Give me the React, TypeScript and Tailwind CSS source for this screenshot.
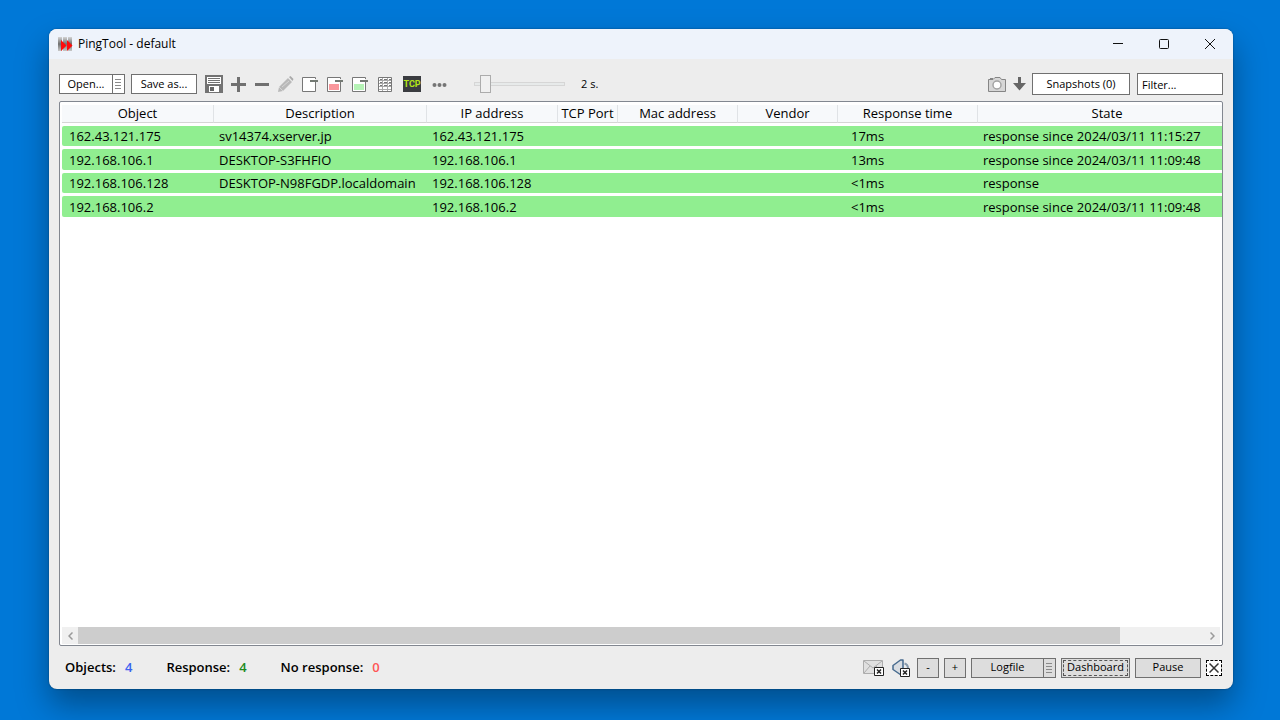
import React from 'react';

type Row = { object: string; description: string; ip: string; time: string; state: string };

const columns = [
  { name: 'Object', width: 'w-[152px]' },
  { name: 'Description', width: 'w-[213px]' },
  { name: 'IP address', width: 'w-[131px]' },
  { name: 'TCP Port', width: 'w-[60px]' },
  { name: 'Mac address', width: 'w-[120px]' },
  { name: 'Vendor', width: 'w-[100px]' },
  { name: 'Response time', width: 'w-[140px]' },
  { name: 'State', width: 'w-[259px]' },
];

const rows: Row[] = [
  { object: '162.43.121.175', description: 'sv14374.xserver.jp', ip: '162.43.121.175', time: '17ms', state: 'response since 2024/03/11 11:15:27' },
  { object: '192.168.106.1', description: 'DESKTOP-S3FHFIO', ip: '192.168.106.1', time: '13ms', state: 'response since 2024/03/11 11:09:48' },
  { object: '192.168.106.128', description: 'DESKTOP-N98FGDP.localdomain', ip: '192.168.106.128', time: '<1ms', state: 'response' },
  { object: '192.168.106.2', description: '', ip: '192.168.106.2', time: '<1ms', state: 'response since 2024/03/11 11:09:48' },
];

const whiteButton = 'border border-[#707070] bg-white pt-px text-center whitespace-nowrap';
const grayButton = 'h-5 border border-[#707070] bg-[#dddddd] text-center whitespace-nowrap';

const Logo = () => (
  <svg width="15" height="15" viewBox="0 0 15 15" aria-hidden="true">
    <defs>
      <linearGradient id="bars" x1="0" y1="0" x2="0" y2="1">
        <stop offset="0" stopColor="#d4d4d4" />
        <stop offset="0.5" stopColor="#6f6f6f" />
        <stop offset="1" stopColor="#c9c9c9" />
      </linearGradient>
    </defs>
    <path d="M0 0h4v14H0zM5 0h4v14H5zM10 0h4v14h-4z" fill="url(#bars)" />
    <path d="M3 3l5.500 5.500L3 14zM9 3l5.500 5.500L9 14z" fill="#fe0b0b" />
  </svg>
);

const Grip = () => (
  <svg width="7" height="10" viewBox="0 0 7 10" aria-hidden="true">
    <path d="M0 .5h6M0 3.500h6M0 6.500h6M0 9.500h6" stroke="#8a8a8a" />
  </svg>
);

const SaveIcon = () => (
  <svg width="18" height="18" viewBox="0 0 18 18" aria-hidden="true">
    <path d="M0 0h18v18H0z" fill="#737373" />
    <path d="M2 2h14v7H2zM4 11h10v6H4z" fill="#fff" />
    <path d="M3 3.500h12M3 5.500h12M3 7.500h12" stroke="#737373" />
    <path d="M5 12h4v4H5z" fill="#666" />
  </svg>
);

const PencilIcon = () => (
  <svg width="16" height="16" viewBox="0 0 16 16" aria-hidden="true">
    <path d="M0 16l1-5 9-9 4 4-9 9z" fill="#b9b9b9" />
    <path d="M11 1l1.500-1 3 3-1 2z" fill="#aaa" />
    <path d="M10 2l4 4M1 11l4 4M4 11l7-6" stroke="#d6d6d6" fill="none" />
  </svg>
);

const SheetIcon = ({ fill }: { fill: string }) => (
  <svg width="16" height="16" viewBox="0 0 16 16" aria-hidden="true">
    <path d="M.5 1.500h13v14H.5z" fill="#fff" stroke="#777" />
    <path d="M2 8h10v6H2z" fill={fill} />
    <path d="M8 4.500h8" stroke="#ededed" strokeWidth="3" />
    <path d="M8 3h5v3H8z" fill="#fff" />
    <path d="M8 4h8v2H8z" fill="#737973" />
  </svg>
);

const GridIcon = () => (
  <svg width="14" height="15" viewBox="0 0 14 15" aria-hidden="true">
    <path d="M.5.5h13v14H.5z" fill="#fff" stroke="#777" />
    <path d="M1 3.500h12M1 6.500h12M1 9.500h12M1 12.500h12M4.500 1v13M9.500 1v13" stroke="#aaa" />
    <path d="M2 2.500h2M6 2.500h3M11 2.500h2M2 5.500h2M6 5.500h3M11 5.500h2M2 8.500h2M6 8.500h3M11 8.500h2" stroke="#777" />
  </svg>
);

const CameraIcon = () => (
  <svg width="18" height="15" viewBox="0 0 18 15" aria-hidden="true">
    <path d="M.5 2.500H5L7 .5h5l1.500 2h4v12H.5z" fill="#d6d6d6" stroke="#858585" />
    <path d="M2 1.500h3" stroke="#858585" />
    <circle cx="9" cy="8" r="4" fill="#fff" stroke="#a3a3a3" strokeWidth="1.500" />
    <circle cx="9" cy="8" r="2" fill="#fff" />
  </svg>
);

const OffBadge = () => (
  <g>
    <path d="M.5.5h9v8h-9z" fill="#fff" stroke="#222" />
    <path d="M3 2.500l4 4M7 2.500l-4 4" stroke="#222" strokeWidth="1.500" />
  </g>
);

const MailOffIcon = () => (
  <svg width="22" height="17" viewBox="0 0 22 17" aria-hidden="true">
    <path d="M.5 1.500h19v13H.5z" fill="#e0e0e0" stroke="#adadad" />
    <path d="M1 2l9 7 9-7M1 14l6-7M19 14l-6-7" fill="none" stroke="#adadad" />
    <g transform="translate(11 8)"><OffBadge /></g>
  </svg>
);

const SoundOffIcon = () => (
  <svg width="18" height="18" viewBox="0 0 18 18" aria-hidden="true">
    <path d="M1 6.500L8.500 1h2.500v15H9L1 10.500z" fill="#d9dde2" stroke="#466a8e" strokeWidth="1.500" strokeLinejoin="round" />
    <path d="M12.500 4.500q3.500 1 3.500 5" fill="none" stroke="#8a9cae" strokeWidth="2" />
    <g transform="translate(8 9)"><OffBadge /></g>
  </svg>
);

const TitleBar = () => (
  <header className="flex h-[30px] items-center bg-[#eef3fb] pl-[9px]">
    <Logo />
    <h1 className="ml-[5px] flex-1 text-[12px]">PingTool - default</h1>
    <button aria-label="Minimize" className="flex h-full w-[46px] items-center justify-center">
      <svg width="10" height="10" viewBox="0 0 10 10"><path d="M0 4.500h10" stroke="#111" /></svg>
    </button>
    <button aria-label="Maximize" className="flex h-full w-[46px] items-center justify-center">
      <svg width="10" height="10" viewBox="0 0 10 10"><rect x=".5" y=".5" width="9" height="9" rx="1" fill="none" stroke="#111" /></svg>
    </button>
    <button aria-label="Close" className="flex h-full w-[46px] items-center justify-center">
      <svg width="10" height="10" viewBox="0 0 10 10"><path d="M0 0l10 10M10 0L0 10" stroke="#111" /></svg>
    </button>
  </header>
);

const Toolbar = () => (
  <div className="flex h-[22px] items-center text-[11px]">
    <button className={`${whiteButton} h-5 w-[54px]`}>Open...</button>
    <button aria-label="Open menu" className="flex h-5 w-3 items-center justify-center border border-l-0 border-[#707070] bg-white"><Grip /></button>
    <button className={`${whiteButton} ml-[6px] h-5 w-[66px]`}>Save as...</button>
    <div className="ml-2 flex items-center">
      <button aria-label="Save"><SaveIcon /></button>
      <button aria-label="Add" className="ml-2">
        <svg width="15" height="15" viewBox="0 0 15 15"><path d="M0 7.500h15M7.500 0v15" stroke="#707070" strokeWidth="3" /></svg>
      </button>
      <button aria-label="Remove" className="ml-[9px]">
        <svg width="14" height="15" viewBox="0 0 14 15"><path d="M0 7.500h14" stroke="#707070" strokeWidth="3" /></svg>
      </button>
      <button aria-label="Edit" className="ml-[9px]"><PencilIcon /></button>
      <button aria-label="Clear marks" className="ml-2"><SheetIcon fill="#fff" /></button>
      <button aria-label="Remove without response" className="ml-[9px]"><SheetIcon fill="#f9979c" /></button>
      <button aria-label="Remove with response" className="ml-[9px]"><SheetIcon fill="#b5f3b5" /></button>
      <button aria-label="Columns" className="ml-[10px]"><GridIcon /></button>
      <button className="ml-[11px] h-4 w-[18px] bg-[#3a3c40] text-center font-['Roboto',sans-serif] text-[9px] leading-4 font-bold text-[#b4e617]">TCP</button>
      <button aria-label="More" className="ml-[11px]">
        <svg width="15" height="5" viewBox="0 0 15 5"><g fill="#757575"><circle cx="2.500" cy="3" r="2" /><circle cx="7.500" cy="3" r="2" /><circle cx="12.500" cy="3" r="2" /></g></svg>
      </button>
    </div>
    <input
      id="interval"
      type="range"
      min={1}
      max={16}
      defaultValue={2}
      aria-label="Interval"
      className="ml-[27px] h-[18px] w-[91px] appearance-none bg-transparent [&::-webkit-slider-runnable-track]:h-1 [&::-webkit-slider-runnable-track]:border [&::-webkit-slider-runnable-track]:border-[#d6d6d6] [&::-webkit-slider-runnable-track]:bg-[#e7eaea] [&::-webkit-slider-thumb]:mt-[-8px] [&::-webkit-slider-thumb]:h-[18px] [&::-webkit-slider-thumb]:w-[11px] [&::-webkit-slider-thumb]:appearance-none [&::-webkit-slider-thumb]:border [&::-webkit-slider-thumb]:border-[#acacac] [&::-webkit-slider-thumb]:bg-[#f0f0f0]"
    />
    <label htmlFor="interval" className="ml-4">2 s.</label>

    <div className="ml-auto flex items-center">
      <button aria-label="Take snapshot"><CameraIcon /></button>
      <button aria-label="Save snapshot" className="ml-[7px]">
        <svg width="13" height="14" viewBox="0 0 13 14"><path d="M5 0h3v6h5l-6.500 7.500L0 6h5z" fill="#666" /></svg>
      </button>
      <button className={`${whiteButton} ml-[6px] h-[22px] w-[98px]`}>Snapshots (0)</button>
      <input
        type="text"
        aria-label="Filter"
        placeholder="Filter..."
        className="ml-[7px] h-[22px] w-[86px] border border-[#707070] bg-white px-1 placeholder:text-black"
      />
    </div>
  </div>
);

const ObjectTable = () => (
  <div className="flex min-h-0 flex-1 flex-col rounded-xs border border-[#828790] bg-white">
    <div className="ml-[2px] flex-1 overflow-hidden">
      <table className="w-[1175px] min-w-full table-fixed border-separate border-spacing-x-0 border-spacing-y-[3px] text-[13px] leading-5 whitespace-nowrap">
        <thead>
          <tr>
            {columns.map((c) => (
              <th key={c.name} className={`${c.width} border-r border-b border-r-[#e0e3e6] border-b-[#d5d5d5] bg-[#f7f9fb] p-0 leading-[17px] font-normal`}>{c.name}</th>
            ))}
          </tr>
        </thead>
        <tbody>
          {rows.map((r) => (
            <tr key={r.object} className="odd:h-5 even:h-[21px] [&>td]:bg-[#90ee90] [&>td]:py-0 [&>td]:pr-0">
              <td className="rounded-l-xs pl-[7px]">{r.object}</td>
              <td className="pl-[5px]">{r.description}</td>
              <td className="pl-[5px]">{r.ip}</td>
              <td />
              <td />
              <td />
              <td className="pl-[13px]">{r.time}</td>
              <td className="pl-[5px]">{r.state}</td>
            </tr>
          ))}
        </tbody>
      </table>
    </div>
    <div className="mx-[2px] mb-px flex h-[17px] bg-[#f0f0f0]">
      <button aria-label="Scroll left" className="flex w-4 items-center justify-center">
        <svg width="5" height="8" viewBox="0 0 5 8"><path d="M4.500.5L1 4l3.500 3.500" fill="none" stroke="#9a9a9a" strokeWidth="1.500" /></svg>
      </button>
      <div className="flex-1"><div className="h-full w-[92.5%] bg-[#cdcdcd]" /></div>
      <button aria-label="Scroll right" className="flex w-4 items-center justify-center">
        <svg width="5" height="8" viewBox="0 0 5 8"><path d="M.5.5L4 4 .5 7.500" fill="none" stroke="#9a9a9a" strokeWidth="1.500" /></svg>
      </button>
    </div>
  </div>
);

const StatusBar = () => (
  <footer className="flex h-[43px] items-center text-[11px]">
    <dl className="ml-[6px] flex gap-[34px] text-[13px] font-semibold">
      <div className="flex gap-[9px]"><dt>Objects:</dt><dd className="text-[#3c63f0]">4</dd></div>
      <div className="flex gap-[9px]"><dt>Response:</dt><dd className="text-[#1d8a1d]">4</dd></div>
      <div className="flex gap-[9px]"><dt>No response:</dt><dd className="text-[#ff5555]">0</dd></div>
    </dl>
    <div className="mr-px ml-auto flex items-center">
      <button aria-label="Mail alerts off"><MailOffIcon /></button>
      <button aria-label="Sound off" className="ml-[7px]"><SoundOffIcon /></button>
      <button className={`${grayButton} ml-[7px] w-[22px]`}>-</button>
      <button className={`${grayButton} ml-[5px] w-[22px]`}>+</button>
      <button className={`${grayButton} ml-[5px] w-[73px]`}>Logfile</button>
      <button aria-label="Logfile menu" className="flex h-5 w-3 items-center justify-center border border-l-0 border-[#707070] bg-[#dddddd]"><Grip /></button>
      <button className={`${grayButton} ml-[5px] w-[69px] p-px`}>
        <span className="flex h-full items-center justify-center border border-dashed border-[#555]">Dashboard</span>
      </button>
      <button className={`${grayButton} ml-[5px] w-[66px]`}>Pause</button>
      <button aria-label="Close panel" className="ml-[5px] flex h-4 w-4 items-center justify-center border border-dashed border-black bg-white">
        <svg width="10" height="10" viewBox="0 0 10 10"><path d="M.5.5l9 9M9.500.5l-9 9" stroke="#333" strokeWidth="1.500" /></svg>
      </button>
    </div>
  </footer>
);

export default function App() {
  return (
    <div className="flex h-screen flex-col overflow-hidden bg-[#0078d7] pt-[29px] pr-[47px] pb-[31px] pl-[49px] font-['Open_Sans','Noto_Sans',sans-serif] text-black">
      <main className="flex min-h-0 flex-1 flex-col overflow-hidden rounded-lg bg-[#ededed] shadow-[0_16px_32px_rgba(0,0,0,0.35),0_0_2px_rgba(0,0,0,0.4)]">
        <TitleBar />
        <div className="flex min-h-0 flex-1 flex-col px-[10px] pt-[14px]">
          <Toolbar />
          <div className="mt-[6px] flex min-h-0 flex-1 flex-col">
            <ObjectTable />
          </div>
          <StatusBar />
        </div>
      </main>
    </div>
  );
}
